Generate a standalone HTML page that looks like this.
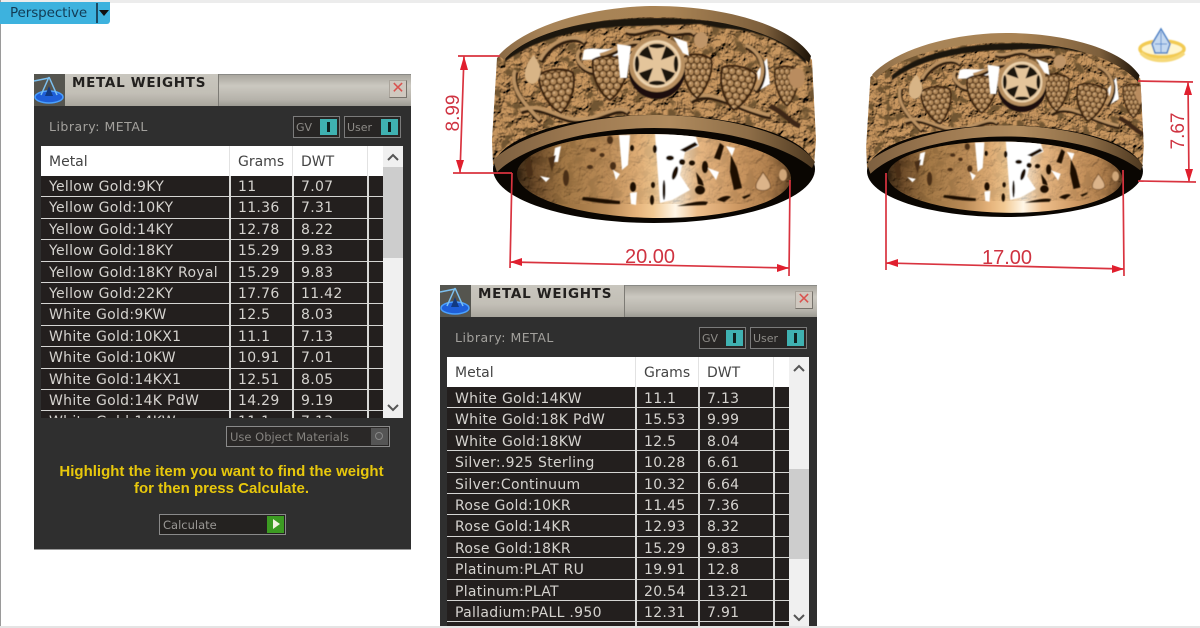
<!DOCTYPE html>
<html><head><meta charset="utf-8">
<style>
html,body{margin:0;padding:0;background:#fff}
#p{position:relative;width:1200px;height:628px;overflow:hidden;background:#fff;font-family:"DejaVu Sans","Liberation Sans",sans-serif}
#p div{position:absolute;box-sizing:border-box}
.dlg{width:377px;background:#2f2f2f;overflow:hidden;filter:blur(.3px)}
.tb{left:0;top:0;width:377px;height:32px;background:linear-gradient(#a9a69e,#cbc8c0 35%,#b5b2aa 80%,#9c9a93);border-top:1px solid #8a8a86}
.tl{left:31px;top:0;width:154px;height:32px;background:linear-gradient(#c9c6be,#c2bfb6 60%,#a9a69d);border-right:1px solid #7d7b75}
.ic{left:0;top:0;width:31px;height:32px;background:#55554f}
.ttl{left:38px;top:0;font-weight:bold;font-size:13.5px;line-height:18px;color:#22201e;white-space:nowrap;letter-spacing:.7px}
.x{left:355px;top:6px;width:18px;height:18px;background:#cfc8bf;border:1px solid #aaa49b;border-right-color:#77736c;border-bottom-color:#77736c;color:#d9534f;font:16px/15px "Liberation Sans",sans-serif;text-align:center}
.lib{left:15px;top:45px;font-size:12.5px;line-height:15px;color:#a3a19d;white-space:nowrap;letter-spacing:.5px}
.tg{top:42px;height:22px;border:1px solid #7b7b7b;background:#272524;color:#8e8c88;font-size:11px;line-height:22px;padding-left:2px}
.tg div{top:2px;right:2px;width:17px;height:16px;background:#3fb1b1}
.tg div:after{content:"";position:absolute;left:7px;top:3px;width:3px;height:10px;background:#10201f}
.hd{left:7px;top:72px;width:362px;height:30px;background:#fff;color:#444;font-size:14px;line-height:32px}
.hd span,.r span{position:absolute;white-space:nowrap}
.hd i{position:absolute;top:0;width:1px;height:30px;background:#e2e2e2}
.s1{left:8px}.s2{left:197px}.s3{left:260px}
.rows{left:7px;top:102px;width:342px;height:242px;overflow:hidden;background:#231f1e}
.r{left:0;width:342px;height:21.4px;background:#231f1e;border-bottom:1px solid #d5d5d3;color:#d5d3cf;font-size:14px;line-height:22px;letter-spacing:.3px}
.d2 .r span{top:1px}
.v{top:0;width:2px;height:242px;background:#d9d9d7}
.sb{left:349px;top:72px;width:20px;height:272px;background:#f0f0f0}
.th{left:0;width:20px;background:#cdcdcd}
.um{left:192px;top:352px;width:164px;height:21px;border:1px solid #8a8a8a;background:#2a2827;color:#85837f;font-size:11.5px;line-height:21px;padding-left:3px;white-space:nowrap}
.um div{right:1px;top:1px;width:17px;height:17px;background:#555}
.um div:after{content:"";position:absolute;left:4px;top:4px;width:8px;height:8px;border:1px solid #888;border-radius:50%;box-sizing:border-box}
.msg{left:0;width:375px;text-align:center;top:389px;font:bold 15px/17px "Liberation Sans",sans-serif;color:#e8c80c;white-space:nowrap}
.cal{left:125px;top:440px;width:127px;height:21px;border:1px solid #8a8a8a;background:#242220;color:#9a9895;font-size:11.5px;line-height:20px;padding-left:3px}
.cal div{right:1px;top:1px;width:17px;height:17px;background:#3c9b22}
.cal div:after{content:"";position:absolute;left:6px;top:3px;border-left:7px solid #f2f2e0;border-top:5px solid transparent;border-bottom:5px solid transparent}
</style></head><body>
<div id="p">
<div style="left:0;top:0;width:1200px;height:3px;background:#ececec"></div>
<div style="left:0;top:0;width:1px;height:628px;background:#9a9a9a"></div>
<div style="left:0;top:2px;width:110px;height:22px;background:#3db2de;border-radius:0 0 3px 0;color:#123c55;font:13.5px/22px 'DejaVu Sans',sans-serif;padding-left:10px;letter-spacing:-.1px">Perspective<div style="left:96px;top:1px;width:2px;height:20px;background:#1c4a63"></div><div style="left:99px;top:8px;border-top:6px solid #111;border-left:5px solid transparent;border-right:5px solid transparent"></div></div>

<svg style="position:absolute;left:0;top:0" width="1200" height="628" viewBox="0 0 1200 628">
<defs>
<filter id="bump" x="-5%" y="-5%" width="110%" height="110%">
<feTurbulence type="fractalNoise" baseFrequency=".1" numOctaves="3" seed="7" result="n"/>
<feDiffuseLighting in="n" surfaceScale="6" diffuseConstant="1" lighting-color="#cc9a62" result="l"><feDistantLight azimuth="240" elevation="52"/></feDiffuseLighting>
<feTurbulence type="fractalNoise" baseFrequency=".09" numOctaves="3" seed="3" result="n2"/>
<feColorMatrix in="n2" type="matrix" values="0 0 0 0 .16  0 0 0 0 .09  0 0 0 0 .03  8 0 0 0 -4.4" result="d"/>
<feGaussianBlur in="d" stdDeviation=".7" result="db"/>
<feMerge result="m"><feMergeNode in="l"/><feMergeNode in="db"/></feMerge>
<feComposite in="m" in2="SourceAlpha" operator="in"/>
</filter>
<filter id="soft"><feGaussianBlur stdDeviation=".55"/></filter>
<pattern id="gr" width="7" height="12" patternUnits="userSpaceOnUse"><rect width="7" height="12" fill="#523519"/><circle cx="3.5" cy="3" r="3" fill="#b08758"/><circle cx="0" cy="9" r="3" fill="#b08758"/><circle cx="7" cy="9" r="3" fill="#b08758"/><circle cx="2.8" cy="2.2" r="1.1" fill="#d4b084"/><circle cx="6.3" cy="8.2" r="1.1" fill="#d4b084"/></pattern>
<linearGradient id="rim" x1="0" x2="1"><stop offset="0" stop-color="#8a6a45"/><stop offset=".15" stop-color="#a88458"/><stop offset=".55" stop-color="#a98354"/><stop offset=".85" stop-color="#7d5f3c"/><stop offset="1" stop-color="#1e1408"/></linearGradient>
<linearGradient id="lip" x1="0" x2="1"><stop offset="0" stop-color="#7d6040"/><stop offset=".25" stop-color="#9c7850"/><stop offset=".55" stop-color="#b08b5e"/><stop offset=".8" stop-color="#8c6c46"/><stop offset="1" stop-color="#4d3820"/></linearGradient>
<linearGradient id="inn" x1="0" x2="1"><stop offset="0" stop-color="#1e1206"/><stop offset=".07" stop-color="#5a3c1e"/><stop offset=".17" stop-color="#99703f"/><stop offset=".33" stop-color="#b98a56"/><stop offset=".44" stop-color="#e6b47c"/><stop offset=".5" stop-color="#f2ca94"/><stop offset=".58" stop-color="#fff6e6"/><stop offset=".66" stop-color="#eebf8c"/><stop offset=".8" stop-color="#cf9a64"/><stop offset=".93" stop-color="#a87848"/><stop offset="1" stop-color="#4a3018"/></linearGradient>
<clipPath id="hole"><ellipse cx="654" cy="176" rx="137" ry="42" transform="rotate(1 654 176)"/></clipPath>
<clipPath id="bandc"><path d="M497,58C530,25 600,12 655,12C720,12 785,25 812,60L816,140L814,165L493,165L492,140Z"/></clipPath>
<path id="bn" d="M-17,-17C-8,-23 10,-21 17,-15C19,0 8,18 0,23C-10,17 -19,0 -17,-17Z" stroke="#3a240f" stroke-width="2"/>
<g id="ringA"><path d="M497,58C530,25 600,12 655,12C720,12 785,25 812,60L816,140L814,165L493,165L492,140Z" fill="#a67a50" filter="url(#bump)"/></g>
<g id="orn" filter="url(#soft)">
<path d="M505,56C540,26 600,18 655,18C720,18 785,28 806,58L806,64C780,36 750,30 720,28L700,24L640,26C600,26 540,34 505,62Z" fill="#1d1207"/>
<path d="M584,50C592,46 604,52 618,47L622,54C608,58 594,60 582,60Z" fill="#fff"/>
<path d="M612,72L619,70L619,88L609,85Z" fill="#f4f0ea"/>
<path d="M757,72L767,58L770,84L760,90Z" fill="#fff"/>
<g fill="none" stroke="#2f1d0c" stroke-width="5" transform="translate(1 2)">
<path d="M520,110C545,100 560,125 590,118C610,112 620,105 628,112M580,50C570,60 590,75 598,70M540,60C550,40 575,32 585,42M600,55C620,50 625,40 640,42M625,30C640,36 650,22 665,30C675,36 690,26 695,34M690,100C710,85 740,110 770,115M745,45C760,50 770,70 755,90M540,120C520,100 510,85 515,70"/>
</g>
<g fill="none" stroke="#bb9262" stroke-width="3.5">
<path d="M520,110C545,100 560,125 590,118C610,112 620,105 628,112M580,50C570,60 590,75 598,70M540,60C550,40 575,32 585,42M600,55C620,50 625,40 640,42M625,30C640,36 650,22 665,30C675,36 690,26 695,34M690,100C710,85 740,110 770,115M745,45C760,50 770,70 755,90M540,120C520,100 510,85 515,70"/>
</g>
<use href="#bn" fill="url(#gr)" transform="translate(558,90) rotate(-8)"/>
<use href="#bn" fill="url(#gr)" transform="translate(610,77)"/>
<use href="#bn" fill="url(#gr)" transform="translate(697,75) scale(.85 1)"/>
<use href="#bn" fill="url(#gr)" transform="translate(737,87) rotate(8)"/>
<use href="#bn" fill="url(#gr)" transform="translate(787,85) scale(.7 .9)"/>
<path d="M526,80C522,70 530,58 534,55C538,62 544,70 538,80C535,85 529,85 526,80Z" fill="#d8b486"/>
<ellipse cx="797" cy="78" rx="8" ry="10" fill="#b98c5e"/>
<ellipse cx="701" cy="40" rx="7" ry="8" fill="#bf9568"/>
<path d="M770,106C785,113 790,123 800,126" stroke="#3d2812" stroke-width="5" fill="none"/>
</g>
<g id="ringB">
<path d="M499,55C530,22 600,6 655,6C722,6 790,24 811,56L809,63C780,32 720,17 655,17C600,17 530,30 504,60Z" fill="url(#rim)"/>
<ellipse cx="654" cy="169" rx="161" ry="54" fill="#0a0602"/>
<path d="M493,160C520,134 590,115 654,115C720,115 795,132 815,162L812,168C780,142 715,128 654,128C590,128 525,145 497,172Z" fill="url(#lip)"/>
<ellipse cx="654" cy="176" rx="137" ry="42" transform="rotate(1 654 176)" fill="url(#inn)"/>
<g clip-path="url(#hole)">
<rect x="515" y="134" width="278" height="70" fill="#a67a50" filter="url(#bump)" opacity=".2"/>
<g filter="url(#soft)">
<path d="M655,134H695L699,146L685,152L680,175L690,190L672,200L660,203Z" fill="#fff"/>
<path d="M619,135H630L628,165L622,170ZM555,148L561,146L558,162L553,162ZM540,176L550,178L546,182ZM613,170L620,174L616,180ZM630,193L637,192L636,205L631,204ZM726,146L735,148L732,156ZM708,168L719,172L716,180Z" fill="#fff"/>
<g fill="#1a0f05">
<ellipse cx="632" cy="148" rx="2" ry="3"/><ellipse cx="655" cy="149" rx="2" ry="4"/><ellipse cx="653" cy="185" rx="2" ry="3"/>
<ellipse cx="670" cy="158" rx="4" ry="2.5"/><ellipse cx="682" cy="162" rx="3" ry="3"/>
<ellipse cx="675" cy="173" rx="2.5" ry="7" transform="rotate(18 675 173)"/>
<ellipse cx="692" cy="163" rx="3" ry="2.5"/><ellipse cx="700" cy="190" rx="5" ry="4.5"/><ellipse cx="705" cy="167" rx="3" ry="6"/>
<path d="M680,150L695,142L698,145L685,152Z"/><path d="M714,158L720,143L724,146L720,160Z"/>
<path d="M731,155L737,168L742,188L734,190L730,172Z"/>
<path d="M696,172L702,180L704,186L698,184Z"/>
<path d="M583,197C598,198 610,200 620,201L620,204C604,204 594,202 582,200Z"/>
<path d="M677,206C690,203 700,200 708,202L706,205Z"/>
<path d="M717,200C722,196 728,195 731,197L724,202Z"/>
<path d="M742,197L750,194L750,196L744,199Z"/>
<ellipse cx="633" cy="187" rx="3" ry="5"/><ellipse cx="652" cy="200" rx="2" ry="5"/>
<ellipse cx="664" cy="190" rx="1.5" ry="10"/>
</g>
<g fill="#4a2f15">
<ellipse cx="593" cy="150" rx="3" ry="2"/><ellipse cx="590" cy="167" rx="3" ry="2"/><ellipse cx="613" cy="166" rx="3" ry="4"/><ellipse cx="610" cy="140" rx="3" ry="4"/><ellipse cx="602" cy="155" rx="2.5" ry="2"/>
<path d="M525,165L530,155L533,175L528,178Z"/><path d="M548,158L556,155L552,172Z"/><ellipse cx="566" cy="178" rx="3" ry="8"/>
</g>
<path d="M763,172C767,178 772,184 770,188C766,192 758,191 756,188C755,182 760,178 763,172Z" fill="#dcb48a" stroke="#7a5530"/>
<ellipse cx="783" cy="175" rx="4" ry="6" fill="#d0a678"/>
</g>
</g>
</g>
<g id="med">
<ellipse cx="0" cy="7" rx="28" ry="28" fill="#1a1007"/>
<path d="M-40,-20L-26,-18L-30,14L-37,14ZM16,-27L30,-22L32,-8L26,-11Z" fill="#fff"/>
<circle r="26" fill="#e4c59b" stroke="#b78f60" stroke-width="4"/>
<circle r="22.5" fill="none" stroke="#f1dbb9" stroke-width="1"/>
<g fill="#1d130a">
<path d="M-4,-4L-18,-9Q-16,-14 -9,-18Z"/>
<path d="M4,-4L18,-9Q16,-14 9,-18Z"/>
<path d="M-4,4L-18,9Q-16,14 -9,18Z"/>
<path d="M4,4L18,9Q16,14 9,18Z"/>
<ellipse cx="0" cy="-18" rx="8" ry="2.2"/><ellipse cx="0" cy="19" rx="8" ry="2.2"/>
<ellipse cx="19" cy="0" rx="2.2" ry="8"/><ellipse cx="-20" cy="0" rx="2.2" ry="8"/>
</g>
</g>
</defs>

<use href="#ringA"/>
<g clip-path="url(#bandc)"><use href="#orn"/></g>
<use href="#ringB"/>
<use href="#med" x="657" y="64" filter="url(#soft)"/>
<g stroke="#d9333f" stroke-width="1.7" fill="none">
<path d="M458,56H500M453,173H512M464,56L460,173M512,173L510,268M790,180L789,276M510,262L789,268"/>
</g>
<g fill="#e01f2e">
<path d="M464,56L460,70L468,70ZM460,173L456,160L464,160ZM510,262L522,258L522,266ZM789,268L777,264L777,272Z"/>
</g>
<text x="650" y="263" font-family="Liberation Sans" font-size="20" fill="#cf3341" text-anchor="middle">20.00</text>
<text transform="translate(459,113) rotate(-90)" font-family="Liberation Sans" font-size="19" fill="#cf3341" text-anchor="middle">8.99</text>

<g transform="matrix(.857 0 0 .848 444.5 27.9)">
<use href="#ringA"/>
<g clip-path="url(#bandc)"><use href="#orn" x="17"/></g>
<use href="#ringB"/>
</g>
<use href="#med" transform="translate(1022,82) scale(.86)" filter="url(#soft)"/>
<g stroke="#d9333f" stroke-width="1.7" fill="none">
<path d="M1138,81L1193,82M1138,181L1196,182M1188,82L1189,182M886,173V270M1123,170L1124,276M886,263L1124,269"/>
</g>
<g fill="#e01f2e">
<path d="M1188,82L1184,95L1192,95ZM1189,182L1185,169L1193,169ZM886,263L898,259L898,267ZM1124,269L1112,265L1112,273Z"/>
</g>
<text x="1007" y="264" font-family="Liberation Sans" font-size="20" fill="#cf3341" text-anchor="middle">17.00</text>
<text transform="translate(1184,131) rotate(-90)" font-family="Liberation Sans" font-size="19" fill="#cf3341" text-anchor="middle">7.67</text>

<g filter="url(#soft)">
<ellipse cx="1162" cy="49" rx="22" ry="8" fill="#fff6cf" stroke="#f2cb52" stroke-width="3.5"/>
<path d="M1141,53C1150,63 1174,63 1184,53" fill="none" stroke="#f5d878" stroke-width="3.5"/>
<path d="M1161,29L1170,44L1167,53H1155L1152,44Z" fill="#c5d9f0" stroke="#4a7fc4" stroke-width="1.5"/>
<path d="M1161,32V52M1155,44L1167,44" stroke="#5c8fd0" stroke-width="1"/>
</g>
</svg>

<!-- Dialog 1 -->
<div class="dlg" style="left:34px;top:74px;height:475px;box-shadow:0 1px 0 #999">
 <div class="tb"></div><div class="tl"></div>
 <div class="ic"><svg width="31" height="32" style="position:absolute;left:0;top:0"><ellipse cx="15" cy="23" rx="14" ry="6" fill="#1f5fd8" stroke="#4aa0ff" stroke-width="1.5"/><path d="M15,3L7,21M15,3L23,21M0,7L15,4" stroke="#7cc0f0" stroke-width="1.5" fill="none"/><path d="M11,22L15,12L19,22Z" fill="#123a80"/></svg></div>
 <div class="ttl">METAL WEIGHTS</div><div class="x">✕</div>
 <div class="lib">Library: METAL</div>
 <div class="tg" style="left:259px;width:47px">GV<div></div></div>
 <div class="tg" style="left:310px;width:57px">User<div></div></div>
 <div class="hd"><span class="s1">Metal</span><span class="s2">Grams</span><span class="s3">DWT</span><i style="left:188px"></i><i style="left:251px"></i><i style="left:326px"></i></div>
 <div class="rows" style="height:242px">
  <div class="r" style="top:0"><span class="s1">Yellow Gold:9KY</span><span class="s2">11</span><span class="s3">7.07</span></div>
  <div class="r" style="top:21.4px"><span class="s1">Yellow Gold:10KY</span><span class="s2">11.36</span><span class="s3">7.31</span></div>
  <div class="r" style="top:42.8px"><span class="s1">Yellow Gold:14KY</span><span class="s2">12.78</span><span class="s3">8.22</span></div>
  <div class="r" style="top:64.2px"><span class="s1">Yellow Gold:18KY</span><span class="s2">15.29</span><span class="s3">9.83</span></div>
  <div class="r" style="top:85.6px"><span class="s1">Yellow Gold:18KY Royal</span><span class="s2">15.29</span><span class="s3">9.83</span></div>
  <div class="r" style="top:107px"><span class="s1">Yellow Gold:22KY</span><span class="s2">17.76</span><span class="s3">11.42</span></div>
  <div class="r" style="top:128.4px"><span class="s1">White Gold:9KW</span><span class="s2">12.5</span><span class="s3">8.03</span></div>
  <div class="r" style="top:149.8px"><span class="s1">White Gold:10KX1</span><span class="s2">11.1</span><span class="s3">7.13</span></div>
  <div class="r" style="top:171.2px"><span class="s1">White Gold:10KW</span><span class="s2">10.91</span><span class="s3">7.01</span></div>
  <div class="r" style="top:192.6px"><span class="s1">White Gold:14KX1</span><span class="s2">12.51</span><span class="s3">8.05</span></div>
  <div class="r" style="top:214px"><span class="s1">White Gold:14K PdW</span><span class="s2">14.29</span><span class="s3">9.19</span></div>
  <div class="r" style="top:235.4px"><span class="s1">White Gold:14KW</span><span class="s2">11.1</span><span class="s3">7.13</span></div>
  <div class="v" style="left:188px"></div><div class="v" style="left:251px"></div><div class="v" style="left:326px"></div>
 </div>
 <div class="sb" style="height:272px"><div class="th" style="top:21px;height:91px"></div>
  <svg style="position:absolute;left:3px;top:6px" width="14" height="10"><path d="M2,8L7,3L12,8" fill="none" stroke="#555" stroke-width="2"/></svg>
  <svg style="position:absolute;left:3px;top:257px" width="14" height="10"><path d="M2,2L7,7L12,2" fill="none" stroke="#555" stroke-width="2"/></svg></div>
 <div class="um">Use Object Materials<div></div></div>
 <div class="msg">Highlight the item you want to find the weight<br>for then press Calculate.</div>
 <div class="cal">Calculate<div></div></div>
</div>

<!-- Dialog 2 -->
<div class="dlg d2" style="left:440px;top:285px;height:341px">
 <div class="tb"></div><div class="tl"></div>
 <div class="ic"><svg width="31" height="32" style="position:absolute;left:0;top:0"><ellipse cx="15" cy="23" rx="14" ry="6" fill="#1f5fd8" stroke="#4aa0ff" stroke-width="1.5"/><path d="M15,3L7,21M15,3L23,21M0,7L15,4" stroke="#7cc0f0" stroke-width="1.5" fill="none"/><path d="M11,22L15,12L19,22Z" fill="#123a80"/></svg></div>
 <div class="ttl">METAL WEIGHTS</div><div class="x">✕</div>
 <div class="lib">Library: METAL</div>
 <div class="tg" style="left:259px;width:47px">GV<div></div></div>
 <div class="tg" style="left:310px;width:57px">User<div></div></div>
 <div class="hd"><span class="s1">Metal</span><span class="s2">Grams</span><span class="s3">DWT</span><i style="left:188px"></i><i style="left:251px"></i><i style="left:326px"></i></div>
 <div class="rows" style="height:239px">
  <div class="r" style="top:0"><span class="s1">White Gold:14KW</span><span class="s2">11.1</span><span class="s3">7.13</span></div>
  <div class="r" style="top:21.4px"><span class="s1">White Gold:18K PdW</span><span class="s2">15.53</span><span class="s3">9.99</span></div>
  <div class="r" style="top:42.8px"><span class="s1">White Gold:18KW</span><span class="s2">12.5</span><span class="s3">8.04</span></div>
  <div class="r" style="top:64.2px"><span class="s1">Silver:.925 Sterling</span><span class="s2">10.28</span><span class="s3">6.61</span></div>
  <div class="r" style="top:85.6px"><span class="s1">Silver:Continuum</span><span class="s2">10.32</span><span class="s3">6.64</span></div>
  <div class="r" style="top:107px"><span class="s1">Rose Gold:10KR</span><span class="s2">11.45</span><span class="s3">7.36</span></div>
  <div class="r" style="top:128.4px"><span class="s1">Rose Gold:14KR</span><span class="s2">12.93</span><span class="s3">8.32</span></div>
  <div class="r" style="top:149.8px"><span class="s1">Rose Gold:18KR</span><span class="s2">15.29</span><span class="s3">9.83</span></div>
  <div class="r" style="top:171.2px"><span class="s1">Platinum:PLAT RU</span><span class="s2">19.91</span><span class="s3">12.8</span></div>
  <div class="r" style="top:192.6px"><span class="s1">Platinum:PLAT</span><span class="s2">20.54</span><span class="s3">13.21</span></div>
  <div class="r" style="top:214px"><span class="s1">Palladium:PALL .950</span><span class="s2">12.31</span><span class="s3">7.91</span></div>
  <div class="v" style="left:188px"></div><div class="v" style="left:251px"></div><div class="v" style="left:326px"></div>
 </div>
 <div class="sb" style="height:270px"><div class="th" style="top:112px;height:90px"></div>
  <svg style="position:absolute;left:3px;top:6px" width="14" height="10"><path d="M2,8L7,3L12,8" fill="none" stroke="#555" stroke-width="2"/></svg>
  <svg style="position:absolute;left:3px;top:256px" width="14" height="10"><path d="M2,2L7,7L12,2" fill="none" stroke="#555" stroke-width="2"/></svg></div>
</div>
<div style="left:0;top:626px;width:1200px;height:2px;background:#e4e4e4"></div>
</div>
</body></html>
